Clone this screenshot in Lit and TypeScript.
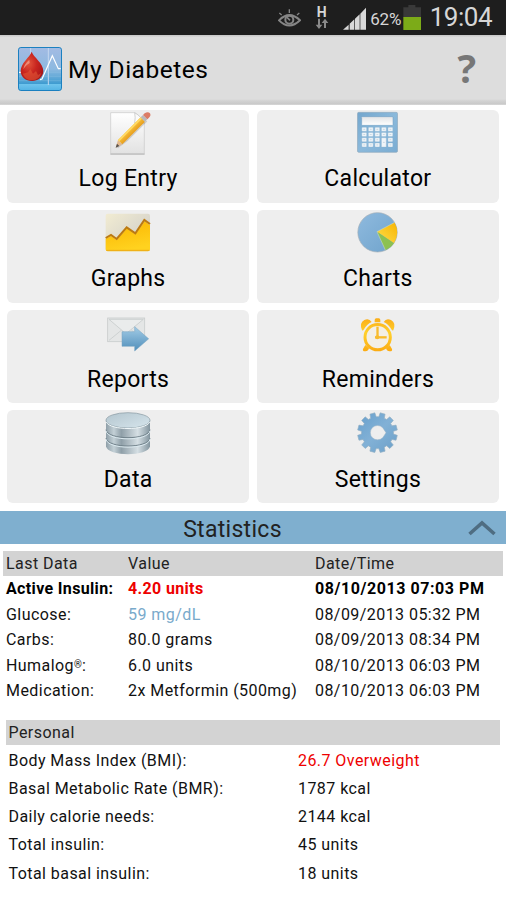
import { LitElement, html, css, svg, nothing } from 'lit';
import type { TemplateResult } from 'lit';
import { customElement, property } from 'lit/decorators.js';
import { classMap } from 'lit/directives/class-map.js';

interface MenuItem {
  label: string;
  icon: string;
}

interface Reading {
  name: string;
  reg?: boolean;
  value: string;
  date: string;
  tone?: 'alert' | 'low';
  bold?: boolean;
}

interface Fact {
  name: string;
  value: string;
  alert?: boolean;
}

const MENU: MenuItem[] = [
  { label: 'Log Entry', icon: 'log' },
  { label: 'Calculator', icon: 'calculator' },
  { label: 'Graphs', icon: 'graph' },
  { label: 'Charts', icon: 'pie' },
  { label: 'Reports', icon: 'mail' },
  { label: 'Reminders', icon: 'alarm' },
  { label: 'Data', icon: 'database' },
  { label: 'Settings', icon: 'gear' },
];

const READINGS: Reading[] = [
  { name: 'Active Insulin', value: '4.20 units', date: '08/10/2013 07:03 PM', tone: 'alert', bold: true },
  { name: 'Glucose', value: '59 mg/dL', date: '08/09/2013 05:32 PM', tone: 'low' },
  { name: 'Carbs', value: '80.0 grams', date: '08/09/2013 08:34 PM' },
  { name: 'Humalog', reg: true, value: '6.0 units', date: '08/10/2013 06:03 PM' },
  { name: 'Medication', value: '2x Metformin (500mg)', date: '08/10/2013 06:03 PM' },
];

const FACTS: Fact[] = [
  { name: 'Body Mass Index (BMI):', value: '26.7 Overweight', alert: true },
  { name: 'Basal Metabolic Rate (BMR):', value: '1787 kcal' },
  { name: 'Daily calorie needs:', value: '2144 kcal' },
  { name: 'Total insulin:', value: '45 units' },
  { name: 'Total basal insulin:', value: '18 units' },
];

/** Outline of a toothed wheel, teeth placed evenly around the centre */
function gearPath(cx: number, cy: number, outer: number, inner: number, teeth: number): string {
  const step = 360 / teeth;
  const points: string[] = [];
  const add = (r: number, deg: number) => {
    const a = (deg * Math.PI) / 180;
    points.push(`${(cx + r * Math.cos(a)).toFixed(1)},${(cy + r * Math.sin(a)).toFixed(1)}`);
  };
  for (let i = 0; i < teeth; i++) {
    const mid = i * step + step / 2;
    add(inner, mid - step * 0.34);
    add(outer, mid - step * 0.24);
    add(outer, mid + step * 0.24);
    add(inner, mid + step * 0.34);
  }
  return `M${points.join('L')}Z`;
}

function calculatorKeys() {
  const keys = [];
  for (let row = 0; row < 4; row++) {
    for (let col = 0; col < 5; col++) {
      if (col === 3 && row === 3) continue;
      const tall = col === 3 && row === 2;
      const x = 65.5 + col * 19.6;
      const y = 66 + row * 15.6;
      keys.push(svg`
        <rect x=${x} y=${y} width="14.5" height=${tall ? 28 : 12} rx="2" fill="#f0f5f9" stroke="#8fb2cd" stroke-width="1"></rect>
        <path d="M${x + 4.5} ${y + (tall ? 14 : 6)}h5.5" stroke="#b5c8d6" stroke-width="2"></path>
      `);
    }
  }
  return keys;
}

const ICONS: Record<string, () => TemplateResult<2>> = {
  log: () => svg`
    <defs>
      <linearGradient id="paper" x1="0" y1="0" x2="0" y2="1">
        <stop offset="0" stop-color="#ffffff"></stop>
        <stop offset="1" stop-color="#e2e2e2"></stop>
      </linearGradient>
      <linearGradient id="wood" x1="0" y1="0" x2="1" y2="1">
        <stop offset="0.35" stop-color="#ffd24a"></stop>
        <stop offset="0.65" stop-color="#e08f12"></stop>
      </linearGradient>
    </defs>
    <path d="M62 22H134C142 28 158 42 163 54V145H62Z" fill="url(#paper)" stroke="#c9c9c9" stroke-width="2"></path>
    <path d="M61 146.500H164" stroke="#a9a9a9" stroke-width="2.500"></path>
    <path d="M134 22Q137 36 134 53Q150 48 163 54Q155 34 134 22Z" fill="#fafafa" stroke="#bdbdbd" stroke-width="2"></path>
    <path d="M82 127L111 105L170 47" fill="none" stroke="#8a8a8a" stroke-opacity="0.350" stroke-width="5"></path>
    <path d="M77 127L84 104L97 117Z" fill="#e2b98f"></path>
    <path d="M77 127L81 115L88 122Z" fill="#55504d"></path>
    <path d="M84 104L152 36L165 49L97 117Z" fill="url(#wood)"></path>
    <path d="M84 104L152 36L156 40L88 108Z" fill="#ffd964"></path>
    <path d="M152 36L159 29L172 42L165 49Z" fill="#b9b9bb"></path>
    <path d="M159 29L164 24Q174 17 180 24Q184 31 177 37L172 42Z" fill="#dc7c66"></path>
  `,
  calculator: () => svg`
    <defs>
      <linearGradient id="case" x1="0" y1="0" x2="1" y2="1">
        <stop offset="0" stop-color="#73a6cd"></stop>
        <stop offset="0.5" stop-color="#8bb9db"></stop>
        <stop offset="1" stop-color="#7aacd2"></stop>
      </linearGradient>
      <linearGradient id="display" x1="0" y1="0" x2="0" y2="1">
        <stop offset="0" stop-color="#e2e4e6"></stop>
        <stop offset="1" stop-color="#ffffff"></stop>
      </linearGradient>
    </defs>
    <rect x="52.500" y="21" width="120" height="120" rx="4" fill="url(#case)" stroke="#8fa9bd" stroke-width="2"></rect>
    <rect x="65" y="34" width="94" height="26" rx="2" fill="url(#display)" stroke="#6c9bbf" stroke-width="1.500"></rect>
    ${calculatorKeys()}
  `,
  graph: () => svg`
    <defs>
      <linearGradient id="sky" x1="0" y1="0" x2="1" y2="1">
        <stop offset="0" stop-color="#f2ecd2"></stop>
        <stop offset="0.6" stop-color="#dad7cc"></stop>
      </linearGradient>
      <linearGradient id="area" x1="0" y1="0" x2="0.300" y2="1">
        <stop offset="0" stop-color="#fbb500"></stop>
        <stop offset="1" stop-color="#ffd21f"></stop>
      </linearGradient>
    </defs>
    <rect x="47" y="25" width="133" height="113" rx="6" fill="url(#sky)"></rect>
    <path d="M47 100L63 92L80 104L111 69L136 87L164 48L180 60V132Q180 138 174 138H53Q47 138 47 132Z" fill="url(#area)"></path>
    <path d="M49 135H178" stroke="#edaa18" stroke-width="3"></path>
    <path d="M47 98L63 89L80 101L110 66L136 84L163 44L180 56" fill="none" stroke="#bc7a12" stroke-width="6"></path>
  `,
  pie: () => svg`
    <defs>
      <linearGradient id="pie" x1="0" y1="0" x2="1" y2="1">
        <stop offset="0" stop-color="#8fbade"></stop>
        <stop offset="1" stop-color="#6fa3cc"></stop>
      </linearGradient>
      <linearGradient id="slice" x1="0" y1="1" x2="1" y2="0">
        <stop offset="0" stop-color="#ffdf4d"></stop>
        <stop offset="1" stop-color="#f8b400"></stop>
      </linearGradient>
    </defs>
    <circle cx="112.500" cy="81" r="59" fill="url(#pie)" stroke="#a1adb6" stroke-width="2"></circle>
    <path d="M111 79L163.600 51.500A59 59 0 0 1 162 113.500Z" fill="url(#slice)"></path>
    <path d="M111 79L162 113.500A59 59 0 0 1 136.500 135Z" fill="#8cc152"></path>
    <path d="M163.600 51.500L111 79L136.500 135" fill="none" stroke="#d6e0c0" stroke-width="1.500"></path>
  `,
  mail: () => svg`
    <defs>
      <linearGradient id="arrow" x1="0" y1="0" x2="0" y2="1">
        <stop offset="0" stop-color="#a3cce6"></stop>
        <stop offset="1" stop-color="#4f8eba"></stop>
      </linearGradient>
    </defs>
    <rect x="53" y="38" width="111" height="71" fill="#e4e6e6" stroke="#c9cccc" stroke-width="2.500"></rect>
    <path d="M57 105L95 74M160 105L124 74" stroke="#c8cccc" stroke-width="2.500"></path>
    <path d="M57 42H160L112 82Q108 85 104 82Z" fill="#eaecec" stroke="#c8cccc" stroke-width="2.500"></path>
    <path d="M96 79H134V64L176 100.500L134 137V123H96Z" fill="url(#arrow)" stroke="#75a2c0" stroke-width="1.500"></path>
  `,
  alarm: () => svg`
    <defs>
      <linearGradient id="brass" gradientUnits="userSpaceOnUse" x1="0" y1="38" x2="0" y2="138">
        <stop offset="0" stop-color="#fbad18"></stop>
        <stop offset="0.450" stop-color="#ffd02c"></stop>
        <stop offset="1" stop-color="#fbab12"></stop>
      </linearGradient>
    </defs>
    <path d="M66 75Q57 52 73 44Q87 37 95 50Q80 57 72 72Q69 77 66 75Z" fill="url(#brass)"></path>
    <path d="M160 75Q169 52 153 44Q139 37 131 50Q146 57 154 72Q157 77 160 75Z" fill="url(#brass)"></path>
    <path d="M104 51V44Q104 39 109 39H116Q121 39 121 44V51Z" fill="url(#brass)"></path>
    <path d="M76 119L87 129Q84 139 75 138Q67 138 69 131Z" fill="url(#brass)"></path>
    <path d="M149 119L138 129Q141 139 150 138Q158 138 156 131Z" fill="url(#brass)"></path>
    <circle cx="113" cy="95.500" r="38" fill="#f3efe6" stroke="url(#brass)" stroke-width="9"></circle>
    <path d="M112.500 64V95.500" fill="none" stroke="#f8bb2c" stroke-width="7"></path>
    <path d="M105 96H140" fill="none" stroke="#f8bb2c" stroke-width="7"></path>
    <circle cx="112" cy="96" r="6" fill="#f8bb2c"></circle>
  `,
  database: () => svg`
    <defs>
      <linearGradient id="drum" x1="0" y1="0" x2="1" y2="0">
        <stop offset="0" stop-color="#8f9fa8"></stop>
        <stop offset="0.180" stop-color="#c3d0d6"></stop>
        <stop offset="0.350" stop-color="#8f9fa8"></stop>
        <stop offset="0.720" stop-color="#d5dfe4"></stop>
        <stop offset="1" stop-color="#83959f"></stop>
      </linearGradient>
      <linearGradient id="lid" x1="0" y1="0" x2="1" y2="1">
        <stop offset="0" stop-color="#b3c5ce"></stop>
        <stop offset="1" stop-color="#d6e5ec"></stop>
      </linearGradient>
    </defs>
    <path d="M48 99V123C52 155 176 155 180 123V99Z" fill="url(#drum)"></path>
    <path d="M48 74V97C52 129 176 129 180 97V74Z" fill="url(#drum)"></path>
    <path d="M48 98C52 130 176 130 180 98" fill="none" stroke="#72838c" stroke-width="3"></path>
    <path d="M48 101.500C52 133.500 176 133.500 180 101.500" fill="none" stroke="#dbe9ef" stroke-width="3"></path>
    <path d="M48 45V72C52 104 176 104 180 72V45Z" fill="url(#drum)"></path>
    <path d="M48 73C52 105 176 105 180 73" fill="none" stroke="#72838c" stroke-width="3"></path>
    <path d="M48 76.500C52 108.500 176 108.500 180 76.500" fill="none" stroke="#dbe9ef" stroke-width="3"></path>
    <ellipse cx="114" cy="45" rx="66" ry="23" fill="url(#lid)" stroke="#84959e" stroke-width="2"></ellipse>
    <path d="M49 50C60 76 168 76 179 50" fill="none" stroke="#f1f8fa" stroke-width="3"></path>
  `,
  gear: () => svg`
    <defs>
      <linearGradient id="steel" x1="0" y1="0" x2="1" y2="1">
        <stop offset="0" stop-color="#679fcc"></stop>
        <stop offset="0.500" stop-color="#82b1d6"></stop>
        <stop offset="1" stop-color="#6b9fc8"></stop>
      </linearGradient>
    </defs>
    <path d=${gearPath(112.5, 82, 60, 48, 12)} fill="url(#steel)" stroke="#93afc3" stroke-width="2" stroke-linejoin="round"></path>
    <path d="M128 67A21.500 21.500 0 1 0 128 97Q131 93 138 82Q131 71 128 67Z" fill="#eeeeee" stroke="#9db5c6" stroke-width="1.500"></path>
  `,
};

/**
 * One button of the main menu: an icon above its label.
 *
 * @element menu-tile
 */
@customElement('menu-tile')
export class MenuTile extends LitElement {
  @property() label = '';
  @property() icon = '';

  static styles = css`
    :host {
      display: flex;
      flex-direction: column;
      align-items: center;
      background: #eeeeee;
      border-radius: 6px;
    }

    .icon {
      display: block;
      width: 80px;
      height: 47px;
    }

    .label {
      margin-top: 7.5px;
      font-size: 23px;
      line-height: 30px;
      letter-spacing: 0.3px;
      color: #000;
      white-space: nowrap;
    }
  `;

  render() {
    return html`
      <svg class="icon" viewBox="-6 14 240 141">${ICONS[this.icon]?.() ?? nothing}</svg>
      <span class="label">${this.label}</span>
    `;
  }
}

/**
 * Phone status bar with signal, battery and clock.
 *
 * @element status-bar
 */
@customElement('status-bar')
export class StatusBar extends LitElement {
  static styles = css`
    :host {
      display: flex;
      align-items: center;
      justify-content: flex-end;
      height: 35px;
      padding-right: 14px;
      box-sizing: border-box;
      background: #1e1e1e;
      color: #d6d6d6;
    }

    svg {
      display: block;
      flex: none;
    }

    .eye {
      margin-right: 14px;
    }

    .network {
      display: flex;
      flex-direction: column;
      align-items: center;
      width: 14px;
      margin-right: 14.5px;
    }

    .mode {
      font-size: 14px;
      font-weight: 700;
      line-height: 12px;
    }

    .signal {
      margin-right: 4px;
    }

    .percent {
      width: 33px;
      height: 33px;
      padding-top: 1px;
      font-size: 17px;
      line-height: 34px;
      letter-spacing: -0.2px;
    }

    .battery {
      margin-right: 7.5px;
    }

    .clock {
      font-size: 26px;
      line-height: 35px;
      letter-spacing: -0.5px;
    }
  `;

  render() {
    return html`
      <svg class="eye" width="23" height="35" viewBox="0 0 69 105">
        <path d="M3 61Q34 30 66 61Q34 92 3 61Z" fill="none" stroke="#858585" stroke-width="6"></path>
        <circle cx="34" cy="59" r="12" fill="none" stroke="#858585" stroke-width="6"></circle>
        <path d="M27 52L36 61" stroke="#858585" stroke-width="5"></path>
        <path d="M34 28V39M4 39L11 45M64 39L57 45" stroke="#858585" stroke-width="4"></path>
      </svg>
      <div class="network">
        <span class="mode">H</span>
        <svg width="14" height="12" viewBox="0 0 42 36">
          <path d="M9 2V20H2L12 33L22 20H15V2ZM27 30V15H20L30 2L40 15H33V30Z" fill="#8a8a8a"></path>
        </svg>
      </div>
      <svg class="signal" width="23" height="35" viewBox="0 0 69 105">
        <path d="M0 89L17 74V89ZM20 89V71L34 58V89ZM36 89V56L50 43V89ZM52 89V41L69 23V89Z" fill="#d8d8d8"></path>
      </svg>
      <span class="percent">62%</span>
      <svg class="battery" width="19" height="35" viewBox="0 0 57 105">
        <path d="M1 22H16V15H37V22H54V52H1Z" fill="#393939"></path>
        <rect x="1" y="51" width="53" height="39" fill="#7cab18"></rect>
      </svg>
      <span class="clock">19:04</span>
    `;
  }
}

/**
 * Home screen: menu grid on top, statistics below.
 *
 * @element app-root
 */
@customElement('app-root')
export class AppRoot extends LitElement {
  static styles = css`
    :host {
      display: flex;
      flex-direction: column;
      width: 506px;
      height: 900px;
      overflow: hidden;
      background: #fff;
      color: #111;
      font-family: Roboto, 'Liberation Sans', sans-serif;
    }

    .header {
      display: flex;
      align-items: center;
      height: 70px;
      padding: 0 30px 2px 18px;
      box-sizing: border-box;
      background: linear-gradient(#cacaca 0 1px, #dddddd 2px 64px, #d2d2d2 66px, #c9c9c9 69px, #dedede 70px);
    }

    .logo {
      display: block;
      width: 44px;
      height: 44px;
    }

    .title {
      flex: 1;
      margin: 2px 0 0 6px;
      font-size: 24.5px;
      font-weight: 400;
      line-height: 32px;
      letter-spacing: 0.5px;
      color: #000;
    }

    .help {
      margin-bottom: 2px;
      font-family: 'Open Sans', 'Noto Sans', sans-serif;
      font-size: 39px;
      font-weight: 700;
      line-height: 50px;
      color: #777;
    }

    .menu {
      display: grid;
      grid-template-columns: 1fr 1fr;
      grid-auto-rows: 93px;
      gap: 7.2px 7.5px;
      padding: 4.7px 7px 0;
    }

    .statistics {
      display: grid;
      grid-template-columns: 465px 1fr;
      align-items: center;
      height: 33px;
      margin-top: 7.7px;
      background: #7fafcf;
    }

    .statistics-title {
      margin: 0;
      padding-top: 3px;
      font-size: 23px;
      font-weight: 400;
      line-height: 32px;
      letter-spacing: 0.3px;
      text-align: center;
      color: #222;
    }

    .chevron {
      display: block;
      width: 34px;
      height: 33px;
    }

    .readings,
    .facts {
      font-size: 16px;
      letter-spacing: 0.44px;
      white-space: nowrap;
    }

    .readings {
      margin: 7px 3px 0;
    }

    .reading {
      display: grid;
      grid-template-columns: 122px 187px 1fr;
      padding-left: 3px;
      line-height: 25.4px;
      height: 25.4px;
    }

    .heading {
      background: #d3d3d3;
      color: #222;
    }

    .bold {
      font-weight: 700;
      letter-spacing: 0.35px;
      color: #000;
    }

    .bold .date {
      letter-spacing: 0.56px;
    }

    .alert {
      color: #ee0000;
    }

    .low {
      color: #79aacb;
    }

    .reg {
      font-size: 10px;
      line-height: 0;
      letter-spacing: 0;
      vertical-align: 3px;
    }

    .facts {
      margin: 16.6px 6px 0;
    }

    .facts-title {
      margin-bottom: 2px;
      padding-left: 2.5px;
      line-height: 25px;
    }

    .fact {
      display: grid;
      grid-template-columns: 289.5px 1fr;
      padding-left: 2.5px;
      line-height: 28.2px;
      height: 28.2px;
    }
  `;

  _renderReading(r: Reading) {
    const tone = { alert: r.tone === 'alert', low: r.tone === 'low' };
    return html`
      <div class="reading ${classMap({ bold: !!r.bold })}">
        <span>${r.name}${r.reg ? html`<span class="reg">®</span>` : nothing}:</span>
        <span class=${classMap(tone)}>${r.value}</span>
        <span class="date">${r.date}</span>
      </div>
    `;
  }

  _renderFact(f: Fact) {
    return html`
      <div class="fact">
        <span>${f.name}</span>
        <span class=${classMap({ alert: !!f.alert })}>${f.value}</span>
      </div>
    `;
  }

  render() {
    return html`
      <status-bar></status-bar>

      <header class="header">
        <svg class="logo" viewBox="54 36 132 132">
          <defs>
            <linearGradient id="tile" x1="0" y1="0" x2="0" y2="1">
              <stop offset="0" stop-color="#a3bbe3"></stop>
              <stop offset="0.500" stop-color="#8db9e0"></stop>
              <stop offset="0.850" stop-color="#3d9bd0"></stop>
              <stop offset="0.860" stop-color="#6dc3ec"></stop>
              <stop offset="1" stop-color="#53b3e4"></stop>
            </linearGradient>
            <radialGradient id="blood" cx="0.350" cy="0.400" r="0.700">
              <stop offset="0" stop-color="#e2543c"></stop>
              <stop offset="0.500" stop-color="#c92620"></stop>
              <stop offset="1" stop-color="#a81418"></stop>
            </radialGradient>
          </defs>
          <rect x="55.500" y="37.500" width="129" height="129" rx="7" fill="url(#tile)" stroke="#1b80c0" stroke-width="3"></rect>
          <path d="M92 39V60M145 39V150" stroke="#c4d8f0" stroke-width="3"></path>
          <path d="M57 112H183M57 124H183M57 137H183" stroke="#9ccdea" stroke-opacity="0.400" stroke-width="2"></path>
          <path d="M57 112H66M120 134L126 132L157 62L175 101H182" fill="none" stroke="#fff" stroke-width="3.500"></path>
          <path d="M95 50C100 66 130 84 130 108C130 126 114 138 96 138C77 138 62 126 62 108C62 84 90 66 95 50Z" fill="url(#blood)"></path>
          <path d="M68 116L84 112L91 102L99 116L108 108L114 120L124 114Q118 136 96 136Q76 135 68 116Z" fill="#e8603a" fill-opacity="0.500"></path>
          <path d="M88 74Q72 88 70 103Q80 88 89 84Z" fill="#f4a592" fill-opacity="0.700"></path>
        </svg>
        <h1 class="title">My Diabetes</h1>
        <span class="help">?</span>
      </header>

      <nav class="menu">
        ${MENU.map((m) => html`<menu-tile .label=${m.label} .icon=${m.icon}></menu-tile>`)}
      </nav>

      <section class="statistics">
        <h2 class="statistics-title">Statistics</h2>
        <svg class="chevron" viewBox="0 0 34 33">
          <path d="M4.500 22L17 11L29.500 22" fill="none" stroke="#4f6d82" stroke-width="3.600"></path>
        </svg>
      </section>

      <section class="readings">
        <div class="reading heading">
          <span>Last Data</span>
          <span>Value</span>
          <span>Date/Time</span>
        </div>
        ${READINGS.map((r) => this._renderReading(r))}
      </section>

      <section class="facts">
        <div class="facts-title heading">Personal</div>
        ${FACTS.map((f) => this._renderFact(f))}
      </section>
    `;
  }
}
